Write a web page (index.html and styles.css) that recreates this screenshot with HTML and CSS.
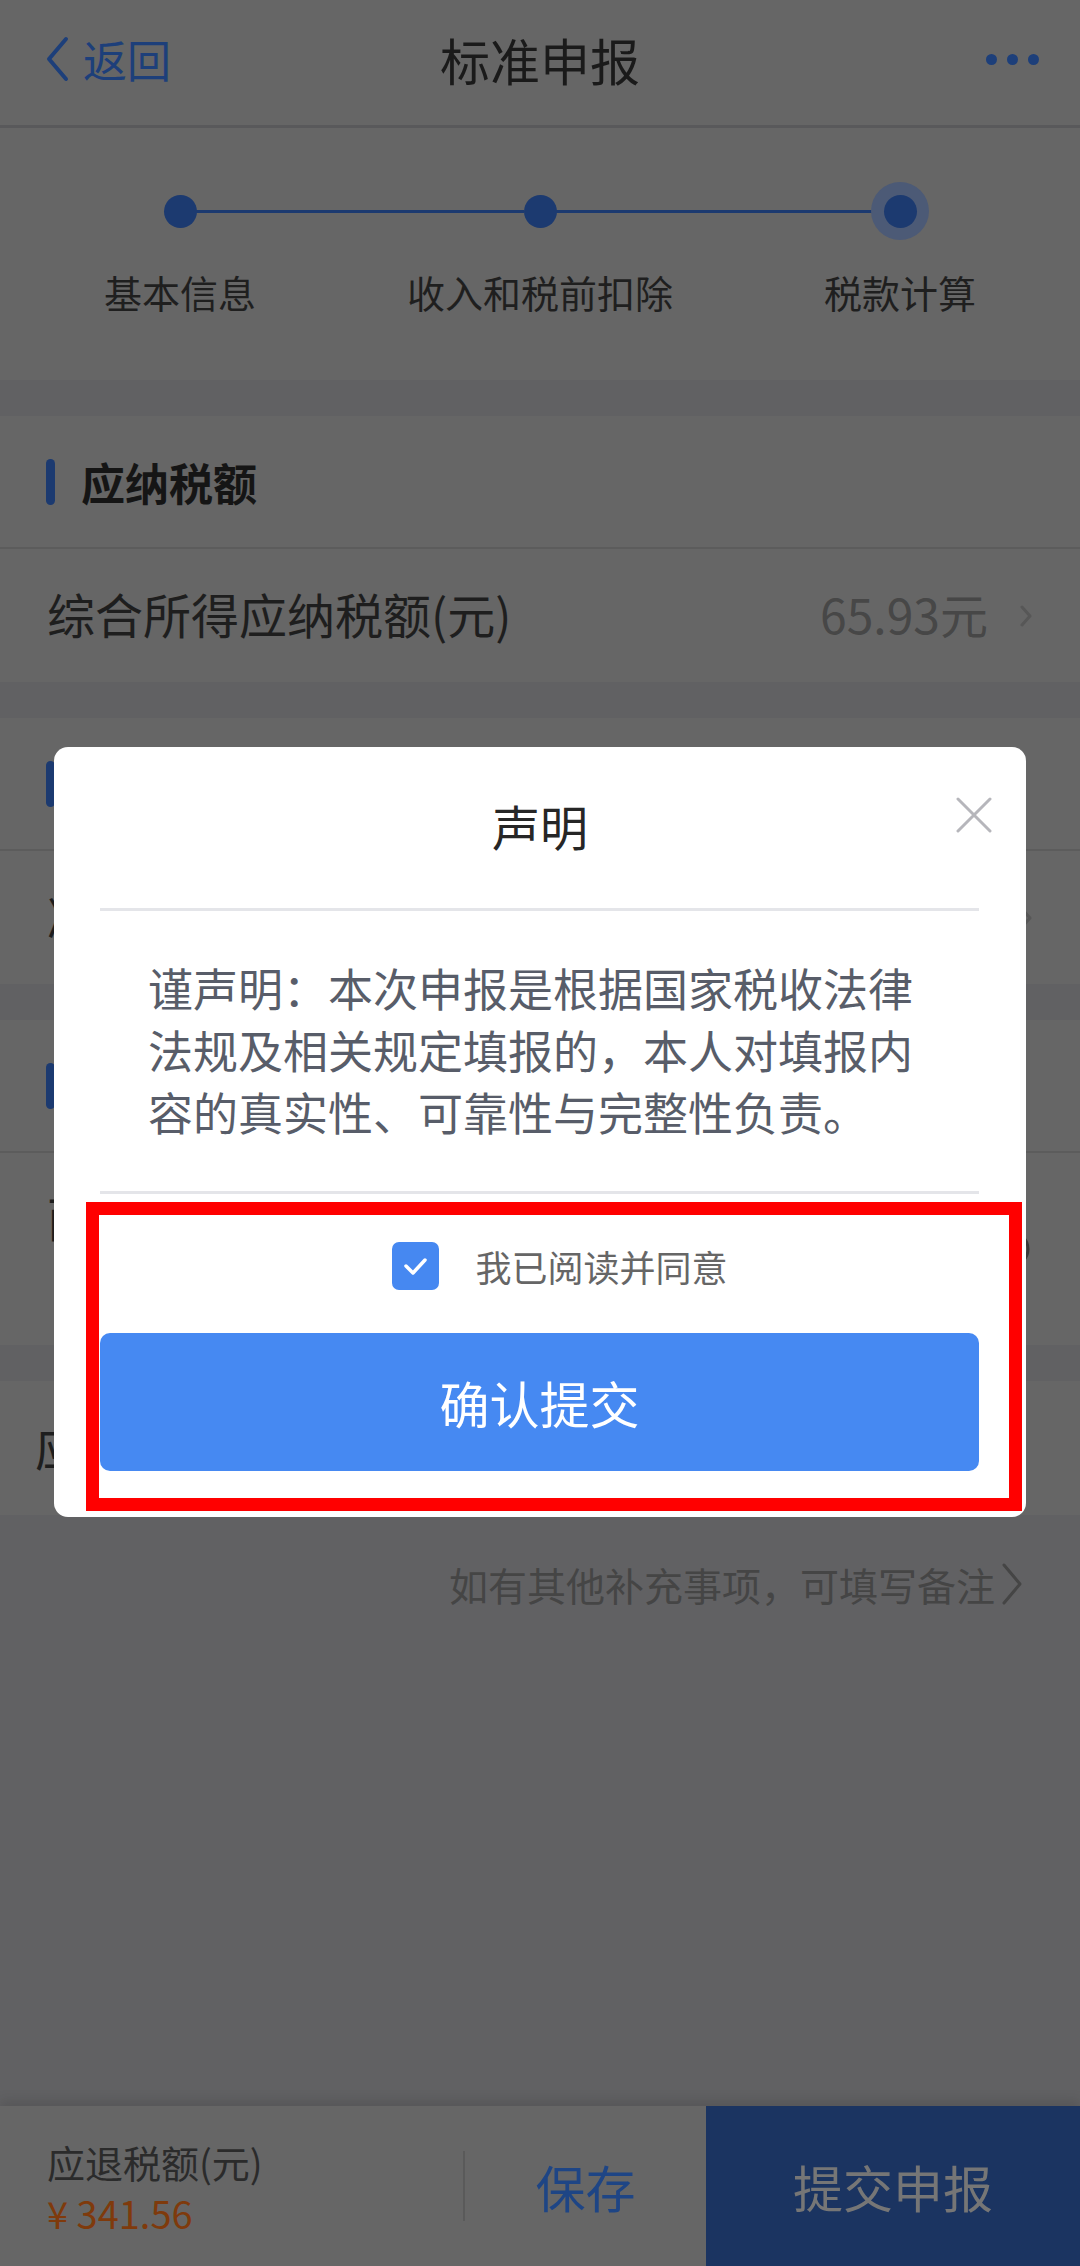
FILE: index.html
```html
<!DOCTYPE html>
<html lang="zh-CN">
<head>
<meta charset="utf-8">
<title>标准申报</title>
<link rel="stylesheet" href="styles.css">
</head>
<body>
<div class="app">
  <header class="nav">
    <div class="nav-back">
      <svg class="nav-chev" width="26" height="46" viewBox="0 0 26 46"><polyline points="22,3 5,23 22,43" fill="none" stroke="#1d3f7a" stroke-width="4" stroke-linecap="round" stroke-linejoin="round"/></svg>
      <span>返回</span>
    </div>
    <div class="nav-title">标准申报</div>
    <div class="nav-more"><i></i><i></i><i></i></div>
  </header>

  <section class="steps">
    <div class="track">
      <div class="node"><span class="dot"></span></div>
      <span class="link"></span>
      <div class="node"><span class="dot"></span></div>
      <span class="link"></span>
      <div class="node node-active"><span class="dot"></span></div>
    </div>
    <div class="step-labels"><span>基本信息</span><span>收入和税前扣除</span><span>税款计算</span></div>
  </section>

  <section class="card">
    <div class="card-head"><span class="bar"></span><h2>应纳税额</h2></div>
    <div class="row">
      <span class="row-label">综合所得应纳税额(元)</span>
      <span class="row-value">65.93元</span>
      <svg class="row-chev" width="14" height="22" viewBox="0 0 14 22"><polyline points="3,2 11,11 3,20" fill="none" stroke="#575757" stroke-width="3" stroke-linecap="round" stroke-linejoin="round"/></svg>
    </div>
  </section>

  <section class="card">
    <div class="card-head"><span class="bar"></span><h2>减免税额</h2></div>
    <div class="row">
      <span class="row-label">减免税额(元)</span>
      <span class="row-value">0.00元</span>
      <svg class="row-chev" width="14" height="22" viewBox="0 0 14 22"><polyline points="3,2 11,11 3,20" fill="none" stroke="#575757" stroke-width="3" stroke-linecap="round" stroke-linejoin="round"/></svg>
    </div>
  </section>

  <section class="card">
    <div class="card-head"><span class="bar"></span><h2>已缴税额</h2></div>
    <div class="row row-tall">
      <span class="row-label">面向个人的已缴税额<br>自动计算(元)</span>
      <svg class="row-ring" width="40" height="40" viewBox="0 0 40 40"><circle cx="20" cy="20" r="17" fill="none" stroke="#3a3a3a" stroke-width="3"/></svg>
    </div>
  </section>

  <section class="card">
    <div class="row row-inset">
      <span class="row-label">应补(退)税额(元)</span>
    </div>
  </section>

  <div class="remark">
    <span>如有其他补充事项，可填写备注</span>
    <svg width="26" height="44" viewBox="0 0 26 44"><polyline points="5,3 21,22 5,41" fill="none" stroke="#454545" stroke-width="3" stroke-linecap="round" stroke-linejoin="round"/></svg>
  </div>

  <div class="spacer"></div>

  <footer class="bottom">
    <div class="bottom-sum">
      <div class="sum-label">应退税额(元)</div>
      <div class="sum-amount">¥ 341.56</div>
    </div>
    <span class="bottom-sep"></span>
    <div class="bottom-save">保存</div>
    <div class="bottom-submit">提交申报</div>
  </footer>
</div>

<div class="modal">
  <div class="modal-head">
    <div class="modal-title">声明</div>
    <svg class="modal-close" width="36" height="36" viewBox="0 0 36 36"><path d="M2 2 L34 34 M34 2 L2 34" stroke="#b6b6bb" stroke-width="3" stroke-linecap="round"/></svg>
  </div>
  <div class="modal-rule"></div>
  <p class="modal-text">谨声明：本次申报是根据国家税收法律法规及相关规定填报的，本人对填报内容的真实性、可靠性与完整性负责。</p>
  <div class="modal-rule modal-rule-2"></div>
  <div class="agree">
    <svg width="47" height="48" viewBox="0 0 47 48"><rect x="0" y="0" width="47" height="48" rx="7" fill="#4688f1"/><polyline points="14,24 21,31 33,18" fill="none" stroke="#fff" stroke-width="3.5" stroke-linecap="round" stroke-linejoin="round"/></svg>
    <span>我已阅读并同意</span>
  </div>
  <div class="confirm">确认提交</div>
</div>

<div class="annot"></div>
</body>
</html>
```

FILE: styles.css
```css
html, body {
  margin: 0;
  padding: 0;
}
body {
  width: 1080px;
  height: 2266px;
  overflow: hidden;
  position: relative;
  background: #616163;
  font-family: "Noto Sans CJK SC", "Noto Sans", sans-serif;
}
.app {
  display: flex;
  flex-direction: column;
  height: 2266px;
}

/* nav */
.nav {
  height: 118px;
  padding-bottom: 7px;
  border-bottom: 3px solid #59595b;
  background: #666666;
  display: grid;
  grid-template-columns: 1fr auto 1fr;
  align-items: center;
}
.nav-back {
  display: flex;
  align-items: center;
  gap: 13px;
  padding-left: 44px;
  color: #1d3f7a;
  font-size: 44px;
  line-height: 1;
}
.nav-chev { display: block; }
.nav-title {
  font-size: 50px;
  line-height: 1;
  color: #1a1a1a;
}
.nav-more {
  justify-self: end;
  display: flex;
  gap: 10px;
  padding-right: 41px;
}
.nav-more i {
  display: block;
  width: 11px;
  height: 11px;
  border-radius: 50%;
  background: #1d3f7a;
}

/* steps */
.steps {
  background: #666666;
  padding: 54px 0 63px;
}
.track {
  display: flex;
  align-items: center;
  height: 58px;
  padding: 0 151px;
}
.node {
  width: 58px;
  height: 58px;
  flex: none;
  display: flex;
  align-items: center;
  justify-content: center;
  border-radius: 50%;
}
.node-active { background: #4c5a76; }
.dot {
  display: block;
  width: 33px;
  height: 33px;
  border-radius: 50%;
  background: #1c3a70;
}
.link {
  flex: 1;
  height: 3px;
  margin: 0 -13px;
  background: #1c3a70;
}
.step-labels {
  display: grid;
  grid-template-columns: repeat(3, 1fr);
  margin-top: 27px;
  text-align: center;
  font-size: 38px;
  line-height: 50px;
  color: #1f1f1f;
}

/* cards */
.card {
  background: #666666;
  margin-top: 36px;
}
.card-head {
  height: 131px;
  display: flex;
  align-items: center;
  gap: 26px;
  padding-left: 46px;
  border-bottom: 2px solid #5c5c5c;
}
.bar {
  display: block;
  width: 9px;
  height: 46px;
  border-radius: 5px;
  background: #1c3a70;
}
.card-head h2 {
  margin: 0;
  font-size: 44px;
  font-weight: 700;
  line-height: 1;
  color: #151515;
}
.row {
  height: 133px;
  display: flex;
  align-items: center;
  padding: 0 47px;
  font-size: 48px;
  line-height: 1;
  color: #1e1e1e;
}
.row-label {
  flex: 1;
  padding-bottom: 6px;
}
.row-value {
  color: #474747;
  margin-right: 31px;
  padding-bottom: 6px;
}
.row-chev { display: block; }
.row-tall {
  height: 192px;
  line-height: 60px;
  padding-right: 49px;
}
.row-ring { display: block; }
.row-inset {
  height: 134px;
  padding-left: 35px;
}

/* remark */
.remark {
  display: flex;
  justify-content: flex-end;
  align-items: center;
  gap: 4px;
  margin-top: 41px;
  padding-right: 55px;
  font-size: 39px;
  line-height: 56px;
  color: #454545;
}
.remark svg { display: block; }

.spacer { flex: 1; }

/* bottom bar */
.bottom {
  height: 160px;
  display: flex;
  align-items: stretch;
  background: #666666;
  box-shadow: 0 -5px 12px rgba(0, 0, 0, 0.12);
}
.bottom-sum {
  width: 463px;
  box-sizing: border-box;
  padding: 32px 0 0 47px;
}
.sum-label {
  font-size: 38px;
  line-height: 48px;
  color: #2b2b2b;
}
.sum-amount {
  margin-top: 3px;
  font-size: 38px;
  line-height: 48px;
  color: #7f3a0c;
}
.bottom-sep {
  align-self: center;
  width: 2px;
  height: 70px;
  background: #5a5a5a;
}
.bottom-save {
  flex: 1;
  display: flex;
  align-items: center;
  justify-content: center;
  font-size: 50px;
  color: #1e4585;
}
.bottom-submit {
  width: 374px;
  display: flex;
  align-items: center;
  justify-content: center;
  background: #1b3461;
  color: #767676;
  font-size: 50px;
}

/* modal */
.modal {
  position: absolute;
  top: 747px;
  left: 54px;
  width: 972px;
  background: #ffffff;
  border-radius: 14px;
  overflow: hidden;
}
.modal-head {
  height: 161px;
  box-sizing: border-box;
  padding-bottom: 5px;
  display: grid;
  grid-template-columns: 1fr auto 1fr;
  align-items: center;
}
.modal-title {
  grid-column: 2;
  font-size: 48px;
  line-height: 56px;
  color: #262626;
}
.modal-close {
  grid-column: 3;
  justify-self: end;
  align-self: start;
  margin-top: 50px;
  margin-right: 34px;
  display: block;
}
.modal-rule {
  height: 3px;
  margin: 0 47px 0 46px;
  background: #e4e5e9;
}
.modal-text {
  margin: 46px 0 0;
  padding: 0 96px 0 94px;
  font-size: 45px;
  line-height: 62px;
  color: #585d69;
}
.modal-rule-2 { margin-top: 48px; }
.agree {
  display: flex;
  align-items: center;
  justify-content: center;
  gap: 36px;
  height: 48px;
  margin-top: 48px;
  padding-left: 40px;
  font-size: 36px;
  color: #666666;
}
.agree svg { display: block; }
.confirm {
  height: 138px;
  margin: 43px 47px 46px 46px;
  border-radius: 10px;
  background: #4689f2;
  color: #ffffff;
  font-size: 50px;
  display: flex;
  align-items: center;
  justify-content: center;
}

/* annotation frame */
.annot {
  position: absolute;
  left: 86px;
  top: 1202px;
  width: 936px;
  height: 309px;
  box-sizing: border-box;
  border: 13px solid #ff0000;
}
```
